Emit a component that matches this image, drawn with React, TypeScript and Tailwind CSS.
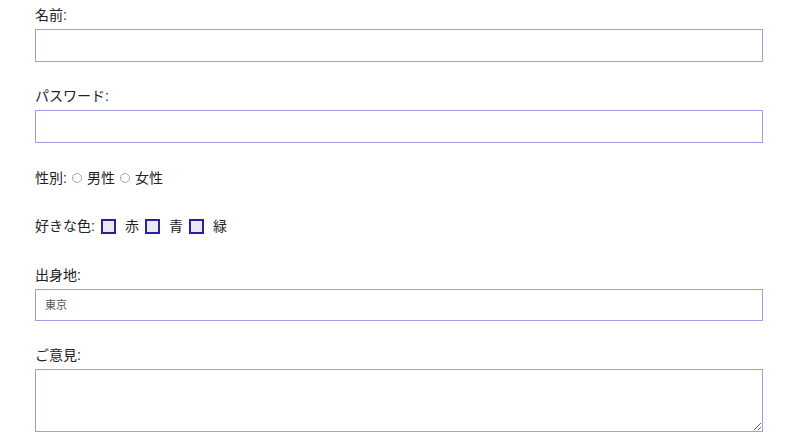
import React from 'react'

const font = { fontFamily: '"Liberation Sans", "Noto Sans CJK JP", sans-serif' }

function Checkbox({ label }: { label: string }) {
  return (
    <label className="flex items-center">
      <span className="ml-[6px] w-[15px] h-[15px] border-2 border-[#2a1f9f] bg-[#e9e9ef] box-border" />
      <span className="ml-[9px]">{label}</span>
    </label>
  )
}

function Radio({ label }: { label: string }) {
  return (
    <label className="flex items-center">
      <span className="ml-[5px] w-[10px] h-[10px] rounded-full border border-[#a8a8a8] bg-white box-border" />
      <span className="ml-[5px]">{label}</span>
    </label>
  )
}

export default function App() {
  return (
    <div className="min-h-screen bg-white text-[14px] text-[#222]" style={font}>
      <form className="w-[728px] ml-[35px] pt-[5px] flex flex-col">
        <div className="h-[20px] leading-[20px]">名前:</div>
        <input type="text" className="mt-[4px] h-[33px] w-full border border-[#a09cea] outline-none box-border" />

        <div className="mt-[24px] h-[20px] leading-[20px]">パスワード:</div>
        <input type="password" className="mt-[4px] h-[33px] w-full border border-[#a09cea] outline-none box-border" />

        <div className="mt-[25px] h-[20px] flex items-center">
          <span>性別:</span>
          <Radio label="男性" />
          <Radio label="女性" />
        </div>

        <div className="mt-[28px] h-[20px] flex items-center">
          <span>好きな色:</span>
          <Checkbox label="赤" />
          <Checkbox label="青" />
          <Checkbox label="緑" />
        </div>

        <div className="mt-[29px] h-[20px] leading-[20px]">出身地:</div>
        <div className="mt-[4px] h-[32px] w-full border border-[#a09cea] box-border flex items-center pl-[9px] text-[11px] text-[#555]">
          東京
        </div>

        <div className="mt-[24px] h-[20px] leading-[20px]">ご意見:</div>
        <textarea className="mt-[4px] h-[63px] w-full border border-[#a09cea] outline-none box-border resize" />
      </form>
    </div>
  )
}
